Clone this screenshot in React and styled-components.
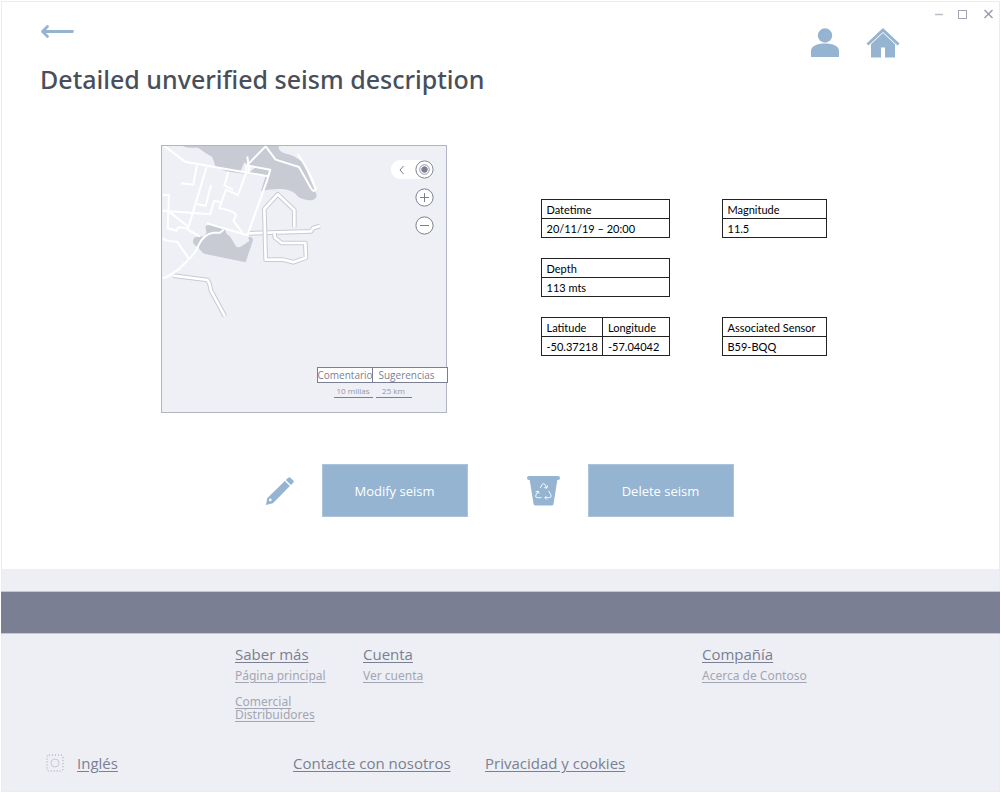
import React from "react";
import styled, { createGlobalStyle } from "styled-components";

const blue = "#94b4d2";
const slate = "#7a7f93";
const pale = "#eeeff4";

const GlobalStyle = createGlobalStyle`
  *, *::before, *::after { box-sizing: border-box; }
  body {
    margin: 0;
    background: #fff;
    font-family: "Open Sans", "Noto Sans", sans-serif;
  }
  svg { display: block; }
`;

const AppWindow = styled.div`
  display: flex;
  flex-direction: column;
  min-height: calc(100vh - 2px);
  margin: 1px;
  border: 1px solid #ececef;
`;

const Header = styled.header`
  display: flex;
  justify-content: space-between;
  height: 96px;
  padding: 4px 1px 0 38px;
`;

const Heading = styled.div`
  display: flex;
  flex-direction: column;
  align-items: flex-start;
  gap: 19px;
  padding-top: 18px;
`;

const IconButton = styled.button`
  display: block;
  padding: 0;
  border: 0;
  background: none;
  color: ${(p) => p.$color || blue};
  cursor: pointer;
`;

const Title = styled.h1`
  margin: 0;
  color: #484f5b;
  font-family: "Noto Sans", "Open Sans", sans-serif;
  font-size: 25px;
  font-weight: 500;
  line-height: 40px;
  white-space: nowrap;
`;

const HeaderTools = styled.div`
  display: flex;
  align-items: flex-start;
  gap: 32px;
`;

const Shortcuts = styled.nav`
  display: flex;
  gap: 26px;
  padding-top: 21px;
`;

const WindowControls = styled.div`
  display: flex;
  gap: 8px;
`;

const Main = styled.main`
  display: flex;
  flex-direction: column;
  align-items: center;
  gap: 51px;
  padding: 47px 14px 52px 0;
`;

const Overview = styled.section`
  display: flex;
  align-items: flex-start;
  gap: 94px;
`;

const MapPanel = styled.div`
  position: relative;
  width: 286px;
  height: 268px;
  border: 1px solid #b1b4c3;
  background: #eff0f5;
`;

const MapControls = styled.div`
  position: absolute;
  top: 14px;
  right: 12px;
  display: flex;
  flex-direction: column;
  align-items: flex-end;
  gap: 9px;
`;

const Locator = styled.div`
  display: flex;
  align-items: center;
  border-radius: 9px;
  background: #fff;
  padding-left: 6px;
  gap: 8px;
`;

const MapLegend = styled.div`
  position: absolute;
  right: -2px;
  bottom: 14px;
  display: flex;
  flex-direction: column;
  gap: 2px;
`;

const Feedback = styled.div`
  display: grid;
  grid-template-columns: 54px 75px;
  border: 1px solid ${slate};
  background: #fff;
`;

const FeedbackButton = styled.button`
  height: 14px;
  padding: 0 0 0 ${(p) => (p.$divided ? 6 : 0)}px;
  border: 0;
  border-left: ${(p) => (p.$divided ? 1 : 0)}px solid ${slate};
  background: none;
  color: ${slate};
  font: 10px/14px "Open Sans", sans-serif;
  text-align: left;
`;

const Scale = styled.div`
  display: flex;
  gap: 3px;
  padding-left: 17px;
`;

const ScaleMark = styled.span`
  width: ${(p) => p.$width}px;
  border-bottom: 1px solid ${slate};
  color: #9296a6;
  font-size: 8px;
  line-height: 12px;
  text-align: center;
  white-space: nowrap;
`;

const Facts = styled.div`
  display: grid;
  grid-template-columns: 129px 105px;
  gap: 20px 52px;
  padding-top: 54px;
`;

const FactTable = styled.table`
  width: 100%;
  height: 39px;
  grid-column: ${(p) => p.$column};
  border-collapse: collapse;
  table-layout: fixed;
  color: #000;
  font-family: Lato, "Open Sans", sans-serif;
  font-size: 11px;
  line-height: 16px;

  th, td {
    height: 19px;
    padding: 2px 0 0 5px;
    border: 1px solid #222;
    font-weight: 400;
    text-align: left;
    white-space: nowrap;
  }

  th:first-child:not(:last-child) { width: 48%; }
`;

const Actions = styled.section`
  display: flex;
  align-items: center;
  gap: 59px;
  padding-left: 12px;
`;

const Action = styled.div`
  display: flex;
  align-items: center;
  gap: 28px;
`;

const ActionButton = styled.button`
  width: 146px;
  height: 53px;
  padding: 0;
  border: 1px solid #a9c4dc;
  background: ${blue};
  color: #fff;
  font: 13px/20px "Open Sans", sans-serif;
  cursor: pointer;
`;

const Footer = styled.footer`
  flex: 1;
  display: flex;
  flex-direction: column;
  padding-top: 22px;
  background: ${pale};
`;

const Band = styled.div`
  height: 43px;
  margin: 0 -1px;
  border: solid #c5c8d1;
  border-width: 1px 0;
  background: ${slate};
`;

const FooterColumns = styled.div`
  display: grid;
  grid-template-columns: 128px 1fr 297px;
  padding: 8px 0 0 233px;
`;

const FooterColumn = styled.nav`
  display: flex;
  flex-direction: column;
  align-items: flex-start;
`;

const FooterLink = styled.a`
  color: ${slate};
  font-size: 15px;
  line-height: 24px;
  white-space: nowrap;
  text-underline-offset: 2px;
`;

const SubLink = styled(FooterLink)`
  color: #a2a6b4;
  font-size: 12px;
  font-family: "Noto Sans", "Open Sans", sans-serif;
  line-height: 20px;
`;

const StackedLink = styled(SubLink)`
  margin-top: 9px;
  line-height: 13px;
`;

const FooterBottom = styled.div`
  display: grid;
  grid-template-columns: 31px 216px 192px 1fr;
  align-items: center;
  padding: 30px 0 14px 44px;
`;

function MapDrawing() {
  const cased = [
    "M282 283L468 277L475 267L495 261",
    "M418 265L418 213L368 166L328 210L332 362L385 362L415 370L453 356L451 312L380 312L360 296L358 283",
    "M55 410L158 423L164 436L168 455L210 532",
  ];
  const roads = [
    "M27 20L90 68L340 112",
    "M277 52L283 100M280 80L346 92L336 125L277 289L155 253",
    "M273 82L332 22L362 62L432 84L468 148Q478 164 482 148Q460 90 428 45",
    "M274 82L274 100L249 168L213 152L193 208Q240 215 243 230L235 245L262 281",
    "M126 78L115 137L78 133",
    "M155 84L98 272L135 292",
    "M220 98L208 140L234 151",
    "M168 138L152 200L125 195",
    "M24 215L165 226L178 185L197 190",
    "M24 168L42 168L38 268L65 275L70 265L98 268M42 218L98 262",
    "M24 298Q30 308 66 308L102 360",
    "M24 418Q60 405 90 372Q125 340 130 320Q145 285 175 281L195 281L206 272",
  ];
  return (
    <svg width="284" height="266" viewBox="0 0 284 266" aria-label="Map">
      <g transform="translate(-7 -7) scale(.3333)" fill="none" strokeLinejoin="round">
        <path fill="#c8cad4" d="M82 20L372 20C368 32 376 40 400 46C420 52 438 64 446 74L482 160C488 170 485 178 474 182C460 186 440 182 428 172C418 158 405 152 380 150Q350 149 318 156L332 110L275 105L220 98L182 84Q177 65 171 53Q150 42 138 32Q128 24 118 26Q92 28 82 20Z" />
        <path fill="#eff0f5" d="M268 70L256 98L276 105L300 86L282 80Z" />
        <path fill="#c8cad4" d="M152 260C165 255 190 255 210 270L215 286C230 290 235 316 247 325C260 326 273 311 283 306L280 295C290 292 296 298 293 307L272 370L150 345C138 341 138 332 125 322C111 317 112 301 120 295L145 292C163 280 149 274 152 260Z" />
        {cased.map((d) => (
          <g key={d}>
            <path d={d} stroke="#c8cad4" strokeWidth="14" />
            <path d={d} stroke="#fff" strokeWidth="8" />
          </g>
        ))}
        <g stroke="#fff" strokeWidth="6">
          {roads.map((d) => <path key={d} d={d} />)}
        </g>
      </g>
    </svg>
  );
}

function RoundIcon({ kind }) {
  return (
    <svg width="19" height="19" viewBox="0 0 19 19" fill="none" stroke="currentColor">
      <circle cx="9.5" cy="9.5" r="8.6" fill="#fff" />
      {kind === "locate" && <circle cx="9.5" cy="9.5" r="4.8" strokeWidth=".8" />}
      {kind === "locate" && <circle cx="9.5" cy="9.5" r="2.8" fill="currentColor" />}
      {kind !== "locate" && <path d="M5 9.5H14" />}
      {kind === "plus" && <path d="M9.5 5V14" />}
    </svg>
  );
}

function Fact({ labels, values, column }) {
  return (
    <FactTable $column={column}>
      <thead>
        <tr>{labels.map((l) => <th key={l} scope="col">{l}</th>)}</tr>
      </thead>
      <tbody>
        <tr>{values.map((v) => <td key={v}>{v}</td>)}</tr>
      </tbody>
    </FactTable>
  );
}

export default function App() {
  return (
    <AppWindow>
      <GlobalStyle />
      <Header>
        <Heading>
          <IconButton aria-label="Back">
            <svg width="36" height="16" viewBox="0 0 36 16" fill="none" stroke="currentColor" strokeWidth="2.8" strokeLinecap="round" strokeLinejoin="round">
              <path d="M32.5 7.5H3M7.5 2.5L2.5 7.5L7.5 12.5" />
            </svg>
          </IconButton>
          <Title>Detailed unverified seism description</Title>
        </Heading>
        <HeaderTools>
          <Shortcuts>
            <IconButton aria-label="Profile">
              <svg width="30" height="32" viewBox="0 0 30 32" fill="currentColor">
                <circle cx="15" cy="8.5" r="7.2" />
                <path d="M1 30V24C1 19 7 16.5 15 16.5S29 19 29 24V30Z" />
              </svg>
            </IconButton>
            <IconButton aria-label="Home">
              <svg width="34" height="32" viewBox="0 0 34 32" fill="currentColor">
                <path d="M17 1L0.5 16.4L2.4 18.5L17 4.9L31.6 18.5L33.5 16.4Z" />
                <path d="M17 6L5 17.2V30.5H15V20.5H19V30.5H29V17.2Z" />
              </svg>
            </IconButton>
          </Shortcuts>
          <WindowControls>
            <IconButton aria-label="Minimize" $color="#b9bbc7">
              <svg width="16" height="16" viewBox="0 0 16 16" stroke="currentColor"><path d="M3 8.5H11" strokeWidth="1.5" /></svg>
            </IconButton>
            <IconButton aria-label="Maximize" $color="#a2a4b3">
              <svg width="14" height="16" viewBox="0 0 14 16" fill="none" stroke="currentColor"><rect x="2.5" y="4.5" width="8" height="8" /></svg>
            </IconButton>
            <IconButton aria-label="Close" $color="#9699a9">
              <svg width="20" height="16" viewBox="0 0 20 16" stroke="currentColor" strokeWidth="1.4"><path d="M6.5 4L14.5 12M14.5 4L6.5 12" /></svg>
            </IconButton>
          </WindowControls>
        </HeaderTools>
      </Header>

      <Main>
        <Overview>
          <MapPanel>
            <MapDrawing />
            <MapControls>
              <Locator>
                <IconButton aria-label="Collapse" $color={slate}>
                  <svg width="10" height="12" viewBox="0 0 10 12" fill="none" stroke="currentColor"><path d="M6.5 2L3 6L6.5 10" /></svg>
                </IconButton>
                <IconButton aria-label="Locate" $color={slate}><RoundIcon kind="locate" /></IconButton>
              </Locator>
              <IconButton aria-label="Zoom in" $color={slate}><RoundIcon kind="plus" /></IconButton>
              <IconButton aria-label="Zoom out" $color={slate}><RoundIcon kind="minus" /></IconButton>
            </MapControls>
            <MapLegend>
              <Feedback>
                <FeedbackButton>Comentario</FeedbackButton>
                <FeedbackButton $divided>Sugerencias</FeedbackButton>
              </Feedback>
              <Scale>
                <ScaleMark $width={39}>10 millas</ScaleMark>
                <ScaleMark $width={36}>25 km</ScaleMark>
              </Scale>
            </MapLegend>
          </MapPanel>
          <Facts>
            <Fact column={1} labels={["Datetime"]} values={["20/11/19 – 20:00"]} />
            <Fact column={2} labels={["Magnitude"]} values={["11.5"]} />
            <Fact column={1} labels={["Depth"]} values={["113 mts"]} />
            <Fact column={1} labels={["Latitude", "Longitude"]} values={["-50.37218", "-57.04042"]} />
            <Fact column={2} labels={["Associated Sensor"]} values={["B59-BQQ"]} />
          </Facts>
        </Overview>

        <Actions>
          <Action>
            <svg width="28" height="28" viewBox="0 0 28 28" fill={blue}>
              <path fillRule="evenodd" d="M0 28L1.2 21.3L18.8 3.9L23.9 9L6.9 26.2ZM4.3 21.6A1.3 1.3 0 1 0 4.3 24.2A1.3 1.3 0 1 0 4.3 21.6Z" />
              <path d="M19.8 2.9L22.2 0.7Q23.3 -0.2 24.4 0.7L27.3 3.6Q28.2 4.7 27.3 5.8L24.9 8Z" />
            </svg>
            <ActionButton>Modify seism</ActionButton>
          </Action>
          <Action>
            <svg width="33" height="30" viewBox="0 0 33 30">
              <path fill={blue} d="M2 0H31Q33 0 33 2T31 4H30.3L26.5 28Q26.2 29.5 24.7 29.5H8.5Q7 29.5 6.6 28L2.7 4H2Q0 4 0 2T2 0Z" />
              <g fill="none" stroke="#fff" strokeOpacity=".9" strokeLinejoin="round">
                <path d="M13.3 12L15 8.6Q16.5 6.6 18 8.6L19.8 12M20.4 9.4L19.9 12.2L17.2 11.6" />
                <path d="M21.6 14.8L24 19Q24.8 21.4 22.5 21.7H18M19.6 19.9L17.8 21.7L19.6 23.5" />
                <path d="M14.5 21.7H10.2Q7.8 21.2 8.9 19L11.2 15.2M8.6 15.9L11.3 15.1L12.2 17.7" />
              </g>
            </svg>
            <ActionButton>Delete seism</ActionButton>
          </Action>
        </Actions>
      </Main>

      <Footer>
        <Band />
        <FooterColumns>
          <FooterColumn>
            <FooterLink href="#">Saber más</FooterLink>
            <SubLink href="#">Página principal</SubLink>
            <StackedLink href="#">Comercial<br />Distribuidores</StackedLink>
          </FooterColumn>
          <FooterColumn>
            <FooterLink href="#">Cuenta</FooterLink>
            <SubLink href="#">Ver cuenta</SubLink>
          </FooterColumn>
          <FooterColumn>
            <FooterLink href="#">Compañía</FooterLink>
            <SubLink href="#">Acerca de Contoso</SubLink>
          </FooterColumn>
        </FooterColumns>
        <FooterBottom>
          <svg width="18" height="18" viewBox="0 0 18 18" fill="none" stroke="#9a9daa">
            <rect x="1" y="1" width="16" height="16" rx="2" strokeDasharray="1 2" />
            <circle cx="9" cy="9" r="4" stroke="#c8cad2" />
          </svg>
          <div><FooterLink href="#">Inglés</FooterLink></div>
          <div><FooterLink href="#">Contacte con nosotros</FooterLink></div>
          <div><FooterLink href="#">Privacidad y cookies</FooterLink></div>
        </FooterBottom>
      </Footer>
    </AppWindow>
  );
}
